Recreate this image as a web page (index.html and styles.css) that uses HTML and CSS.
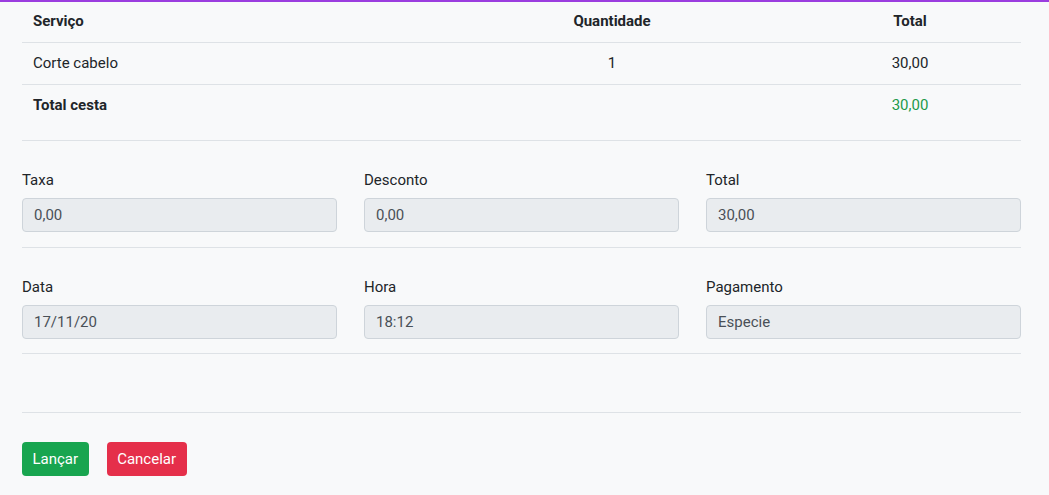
FILE: index.html
```html
<!DOCTYPE html>
<html lang="pt">
<head>
<meta charset="utf-8">
<title>Cesta</title>
<link rel="stylesheet" href="styles.css">
</head>
<body>
<div class="page">
  <table class="items">
    <colgroup>
      <col class="c-serv">
      <col class="c-qtd">
      <col class="c-tot">
    </colgroup>
    <thead>
      <tr>
        <th class="left">Serviço</th>
        <th>Quantidade</th>
        <th>Total</th>
      </tr>
    </thead>
    <tbody>
      <tr>
        <td class="left">Corte cabelo</td>
        <td>1</td>
        <td>30,00</td>
      </tr>
      <tr class="sum">
        <td class="left"><strong>Total cesta</strong></td>
        <td></td>
        <td class="green">30,00</td>
      </tr>
    </tbody>
  </table>

  <hr class="sep">

  <div class="form-row">
    <div class="field">
      <label>Taxa</label>
      <div class="input">0,00</div>
    </div>
    <div class="field">
      <label>Desconto</label>
      <div class="input">0,00</div>
    </div>
    <div class="field">
      <label>Total</label>
      <div class="input">30,00</div>
    </div>
  </div>

  <hr class="sep">

  <div class="form-row">
    <div class="field">
      <label>Data</label>
      <div class="input">17/11/20</div>
    </div>
    <div class="field">
      <label>Hora</label>
      <div class="input">18:12</div>
    </div>
    <div class="field">
      <label>Pagamento</label>
      <div class="input">Especie</div>
    </div>
  </div>

  <hr class="sep">

  <div class="spacer"></div>

  <hr class="sep">

  <div class="actions">
    <button class="btn btn-success">Lançar</button>
    <button class="btn btn-danger">Cancelar</button>
  </div>
</div>
</body>
</html>
```
FILE: styles.css
```css
* { box-sizing: border-box; }

html, body {
  margin: 0;
  padding: 0;
}

body {
  background: #f8f9fa;
  border-top: 2px solid #9b3ddf;
  font-family: Roboto, "Liberation Sans", Arial, sans-serif;
  font-size: 15px;
  color: #212529;
  height: 495px;
  overflow: hidden;
}

.page {
  padding: 0 28px 0 22px;
}

.items {
  width: 999px;
  border-collapse: collapse;
  table-layout: fixed;
}

.c-serv { width: 403px; }
.c-qtd { width: 374px; }
.c-tot { width: 222px; }

.items th,
.items td {
  text-align: center;
  line-height: 21px;
  padding: 10px 11px;
  border-bottom: 1px solid #dee2e6;
}

.items th {
  font-weight: 700;
  padding-top: 9px;
}

.items .left { text-align: left; }

.items tr.sum td {
  border-bottom: none;
}

.items .green { color: #1c9a4a; }

.sep {
  border: 0;
  border-top: 1px solid #dee2e6;
  margin: 0;
  height: 0;
  width: 999px;
}

.items + .sep { margin-top: 14px; }

.form-row {
  display: flex;
  gap: 27px;
  width: 999px;
  padding: 29px 0 14.5px;
}

.field {
  flex: 1 1 0;
  display: flex;
  flex-direction: column;
}

.field label {
  line-height: 21px;
  margin-bottom: 7px;
  color: #212529;
}

.input {
  height: 34px;
  line-height: 32px;
  padding: 0 11px;
  background: #e9ecef;
  border: 1px solid #ced4da;
  border-radius: 4px;
  color: #495057;
}

.spacer { height: 58px; }

.actions {
  display: flex;
  gap: 18px;
  padding-top: 29px;
}

.btn {
  font-family: inherit;
  font-size: 15px;
  height: 34px;
  padding: 0 10.5px;
  border: 0;
  border-radius: 4px;
  color: #fff;
  line-height: 34px;
}

.btn-success { background: #18a54f; }
.btn-danger { background: #e52f4a; }
```
